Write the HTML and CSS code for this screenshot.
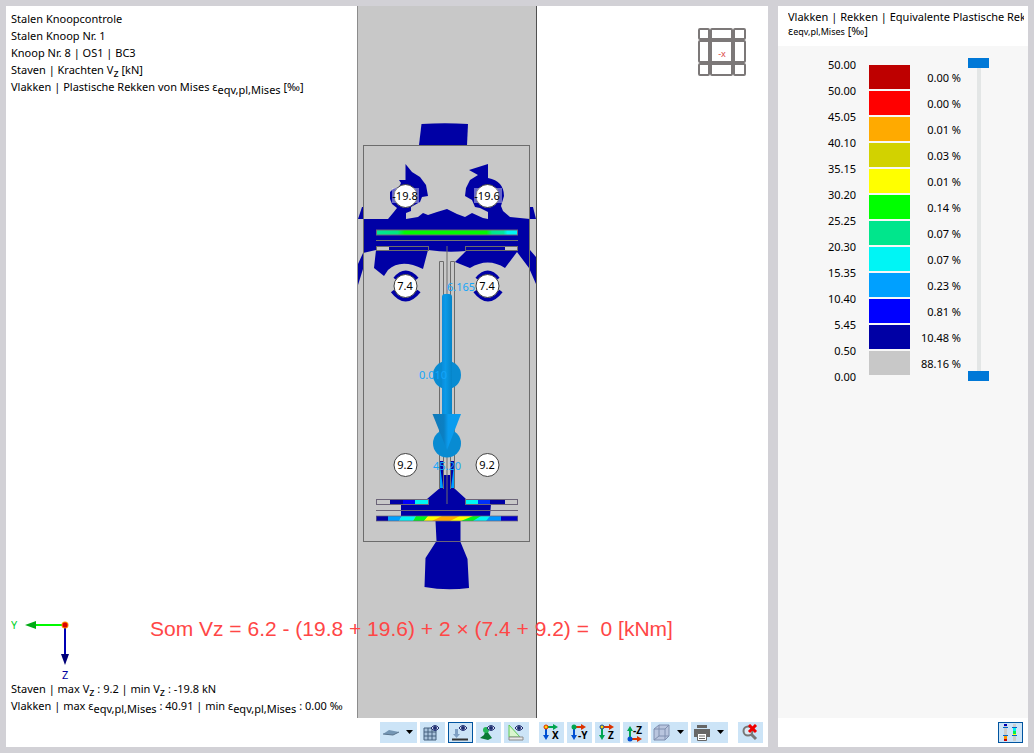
FILE: index.html
```html
<!DOCTYPE html>
<html lang="nl">
<head>
<meta charset="utf-8">
<title>Stalen Knoopcontrole</title>
<link rel="stylesheet" href="styles.css">
</head>
<body>
<main class="app">
  <section class="view">
    <div class="canvas">
      <svg class="model" viewBox="6 6 762 712" role="img" aria-label="Stalen knoop met plastische rekken">
        <defs>
          <linearGradient id="top-strain">
            <stop offset="0" stop-color="#00e696"/><stop offset=".15" stop-color="#00e680"/><stop offset=".2" stop-color="#00fa00"/>
            <stop offset=".78" stop-color="#00fa00"/><stop offset=".82" stop-color="#00e68c"/><stop offset=".9" stop-color="#00e6a0"/><stop offset=".93" stop-color="#00f5f5"/><stop offset="1" stop-color="#00f5f5"/>
          </linearGradient>
          <linearGradient id="rod">
            <stop offset="0" stop-color="#0a8ddb"/><stop offset=".35" stop-color="#0a9ae8"/><stop offset="1" stop-color="#0584c8"/>
          </linearGradient>
          <linearGradient id="cone">
            <stop offset="0" stop-color="#1279b8"/><stop offset=".4" stop-color="#0a80c4"/><stop offset=".55" stop-color="#0a9cee"/><stop offset="1" stop-color="#0a9cee"/>
          </linearGradient>
        </defs>
        <rect x="357" y="-2000" width="180" height="5000" fill="#c8c8c8"/>
        <path d="M357.5-2000V3000" stroke="#8c8c8c"/>
        <path d="M536.5-2000V3000" stroke="#505050"/>

        <g fill="#0000a5">
          <path d="M421.500 124Q445 122.500 468 124L467 145H419Z"/>
          <path d="M358 219L362 207H363V219H388L393 213L397 208L392 204L390 199L390 192L393 189L399 187L401 183L399 180L405.500 180V164L412 172L420 177L426 185L428 196L422 197L420 202L411 207V211L406 213V219L418 217L423 213L428 215L437 212L447 209L457 214L465 217L472 213L483 218L488 219V212L480 208L475 207L472 200L465 196L466 188L470 180L478 175L469 170L488 164V178Q504 181 504 196L501 206L503 211L510 217L530 219V207H533L536 219H530V250L536 257V284L529 268L517 252L505 268Q488 257 470 268L455 262L466 251Q447 253 428 250L423 269Q401 258 388 270L384 276L374 268L376 250L363 253V269L358 285V264L363 253V219Z"/>
          <path d="M401 516V504H428L427 499L440 488H443.500V475H450V488H454L466 499V504H491L490 516Z"/>
          <path d="M435.500 521H460.500V542L467.500 559L469 588Q446 591 424.500 587L425.500 558L436.500 541Z"/>
        </g>
        <g fill="none" stroke="#0000a5" stroke-width="4">
          <path d="M395 279Q405.500 266 417 279M392.500 291Q405.500 308 419 291"/>
          <path d="M477 279Q488 266 498 279M475 291Q488 308 501 291"/>
        </g>

        <rect x="363.500" y="145.500" width="166" height="396" fill="none" stroke="#6c6c6c"/>

        <rect x="376.500" y="230" width="141" height="5" fill="url(#top-strain)" stroke="#6e6478"/>
        <path d="M376 240.500H518" stroke="#747474"/>
        <rect x="377" y="247" width="12" height="4" fill="#c8c8c8"/>
        <rect x="505" y="247" width="12" height="4" fill="#c8c8c8"/>
        <g fill="none" stroke="#6c6c6c">
          <rect x="376.500" y="246.500" width="52" height="4"/>
          <rect x="465.500" y="246.500" width="52" height="4"/>
          <path d="M447 246V504M439.500 489V261.500H443.500V489M450.500 489V261.500H454.500V489"/>
        </g>
        <path d="M440 461H443V489H440ZM451 461H454V489H451Z" fill="#0000a5"/>
        <path d="M440 465L443 488H440ZM454 465L451 488H454Z" fill="#00a0ff"/>

        <rect x="390" y="500" width="14" height="4" fill="#0000a5"/><rect x="403" y="500" width="12" height="4" fill="#0000fa"/><rect x="415" y="500" width="13" height="4" fill="#00f5f5"/>
        <rect x="466" y="500" width="12" height="4" fill="#00f5f5"/><rect x="478" y="500" width="13" height="4" fill="#0030fa"/><rect x="490" y="500" width="15" height="4" fill="#0000a5"/>
        <rect x="376" y="516" width="14" height="5" fill="#0000a5"/>
        <path d="M388 516H402L399 521H388Z" fill="#00a0ff"/>
        <path d="M402 516H416L413 521H399Z" fill="#00f5f5"/>
        <path d="M416 516H429L424 521H413Z" fill="#00f51e"/>
        <path d="M428 516H446L436 521H424Z" fill="#ffff00"/>
        <path d="M442 516H462L454 521H432Z" fill="#ffaa00"/>
        <path d="M460 516H474L462 521H450Z" fill="#ffff00"/>
        <path d="M473 516H482L474 521H461Z" fill="#00f51e"/>
        <path d="M481 516H491L487 521H473Z" fill="#00f5f5"/>
        <path d="M490 516H502L502 521H486Z" fill="#0096ff"/>
        <rect x="501" y="516" width="17" height="5" fill="#0000c8"/>
        <g fill="none" stroke="#6c6478">
          <rect x="376.500" y="499.500" width="52" height="5"/>
          <rect x="465.500" y="499.500" width="52" height="5"/>
          <rect x="376.500" y="516" width="141" height="5" stroke-opacity=".7"/>
          <path d="M376 510.500H518M436 541.500H461"/>
        </g>

        <circle cx="447" cy="375" r="14" fill="#088bd2"/>
        <circle cx="447" cy="443.500" r="14" fill="#088bd2"/>
        <path d="M442 415V297Q442 294 445 294H449Q452 294 452 297V415Z" fill="url(#rod)"/>
        <path d="M432.500 414H461L447 450Z" fill="url(#cone)"/>
        <g class="force">
          <text x="447" y="291">6.165</text>
          <text x="419" y="379">0.010</text>
          <text x="433" y="470">45.20</text>
        </g>

        <g fill="#fff" stroke="#404040">
          <circle cx="405.500" cy="196" r="11.500"/><circle cx="487.500" cy="196" r="11.500"/>
          <circle cx="405.500" cy="286" r="11.500"/><circle cx="487.500" cy="286" r="11.500"/>
          <circle cx="405.500" cy="465" r="11.500"/><circle cx="487.500" cy="465" r="11.500"/>
        </g>
        <path d="M392 188H419V203H392ZM474 188H502V203H474Z" fill="#fff" fill-opacity=".4"/>
        <g class="bolt">
          <text x="405" y="200">-19.8</text><text x="487" y="200">-19.6</text>
          <text x="405" y="290">7.4</text><text x="487" y="290">7.4</text>
          <text x="405" y="469">9.2</text><text x="487" y="469">9.2</text>
        </g>
        <text class="sum" x="150" y="636">Som Vz = 6.2 - (19.8 + 19.6) + 2 × (7.4 + 9.2) =&nbsp; 0 [kNm]</text>
      </svg>

      <div class="overlay">
        <div class="caption">
          <p>Stalen Knoopcontrole</p>
          <p>Stalen Knoop Nr. 1</p>
          <p>Knoop Nr. 8 | OS1 | BC3</p>
          <p>Staven | Krachten V<sub>z</sub> [kN]</p>
          <p>Vlakken | Plastische Rekken von Mises ε<sub>eqv,pl,Mises</sub> [‰]</p>
        </div>
        <svg class="cube" width="50" height="50" viewBox="0 0 50 50" aria-label="Kijkrichting -X">
          <g fill="#fff" stroke="#7c7878" stroke-width="2">
            <rect x="2" y="2" width="10" height="10" rx="1"/><rect x="14" y="2" width="21" height="10" rx="1"/><rect x="37" y="2" width="11" height="10" rx="1"/>
            <rect x="2" y="14" width="10" height="21" rx="1"/><rect x="14" y="14" width="21" height="21" rx="1"/><rect x="37" y="14" width="11" height="21" rx="1"/>
            <rect x="2" y="37" width="10" height="11" rx="1"/><rect x="14" y="37" width="21" height="11" rx="1"/><rect x="37" y="37" width="11" height="11" rx="1"/>
          </g>
          <path d="M13 3V47M36 3V47M3 13H47M3 36H47" stroke="#7c7878" stroke-width="2"/>
          <text class="cube-label" x="25" y="30">-x</text>
        </svg>
      </div>
      <div class="overlay overlay-bottom">
        <div class="caption">
          <svg class="axes" width="70" height="68" viewBox="0 -4 70 68" aria-label="Assen Y en Z">
            <path d="M54 9H24" stroke="#00fa00" stroke-width="2"/>
            <path d="M14 9L25 5V13Z" fill="#00aa14"/>
            <path d="M54 9V39" stroke="#0000b4" stroke-width="2"/>
            <path d="M50 38H58L54 49Z" fill="#000078"/>
            <circle cx="54" cy="9" r="3.500" fill="#ff8c00"/><circle cx="54" cy="9" r="2.500" fill="#dc0000"/>
            <text x="0" y="13" fill="#00d228">Y</text><text x="51" y="63" fill="#0000a0">Z</text>
          </svg>
          <p>Staven | max V<sub>z</sub> : 9.2 | min V<sub>z</sub> : -19.8 kN</p>
          <p>Vlakken | max ε<sub>eqv,pl,Mises</sub> : 40.91 | min ε<sub>eqv,pl,Mises</sub> : 0.00 ‰</p>
        </div>
      </div>
    </div>

    <div class="toolbar" role="toolbar">
      <div class="group">
        <button class="tool wide" aria-label="Weergavevlak">
          <svg width="20" height="17" viewBox="0 0 20 17"><path d="M2 10L8 6L18 8L12 11Z" fill="#7496b4"/><path d="M2 10L12 11L18 8" fill="none" stroke="#58738c"/></svg>
          <svg class="arrow" width="7" height="5" viewBox="0 0 7 5"><path d="M0 0H7L3.500 4Z"/></svg>
        </button>
        <button class="tool" aria-label="Raster tonen">
          <svg width="21" height="17" viewBox="0 0 21 17"><path d="M2 4H14V16H2Z" fill="#a9c3dc" stroke="#45617e"/><path d="M2 8H14M2 12H14M6 4V16M10 4V16" stroke="#45617e"/><g class="eye"><path d="M9 4Q13-1 17 4Q13 9 9 4Z"/><circle cx="13" cy="4" r="2"/></g></svg>
        </button>
        <button class="tool selected" aria-label="Belasting tonen" aria-pressed="true">
          <svg width="21" height="17" viewBox="0 0 21 17"><path d="M5 5H8V10H10L6.500 14L3 10H5Z" fill="#7fa0c4"/><path d="M2 15.500H18" stroke="#333" stroke-width="2"/><g class="eye"><path d="M9 4Q13-1 17 4Q13 9 9 4Z"/><circle cx="13" cy="4" r="2"/></g></svg>
        </button>
        <button class="tool" aria-label="Steunpunt tonen">
          <svg width="21" height="17" viewBox="0 0 21 17"><path d="M8 5L11 10L14 14L10 16L2 14L6 11Z" fill="#0b7a35"/><circle cx="8" cy="6" r="3" fill="#23b757"/><g class="eye"><path d="M9 4Q13-1 17 4Q13 9 9 4Z"/><circle cx="13" cy="4" r="2"/></g></svg>
        </button>
        <button class="tool" aria-label="Maten tonen">
          <svg width="21" height="17" viewBox="0 0 21 17"><path d="M3 1V13H14Z" fill="#d9f5cf" stroke="#5ecb55"/><path d="M3 13H17V16H3Z" fill="#e8e8e8" stroke="#8a8a8a"/><g class="eye"><path d="M9 4Q13-1 17 4Q13 9 9 4Z"/><circle cx="13" cy="4" r="2"/></g></svg>
        </button>
      </div>
      <div class="group">
        <button class="tool" aria-label="Aanzicht X">
          <svg width="21" height="17" viewBox="0 0 21 17"><path d="M5 3H13" stroke="#00a550" stroke-width="2"/><path d="M12 0L17 3L12 6Z" fill="#00a550"/><path d="M5 4V12" stroke="#004fd2" stroke-width="2"/><path d="M2 11H8L5 16Z" fill="#004fd2"/><circle cx="5" cy="3" r="2" fill="#ffd700" stroke="#e12800"/><text x="11" y="15">X</text></svg>
        </button>
        <button class="tool" aria-label="Aanzicht -Y">
          <svg width="21" height="17" viewBox="0 0 21 17"><path d="M5 3H13" stroke="#dc3200" stroke-width="2"/><path d="M12 0L17 3L12 6Z" fill="#dc3200"/><path d="M5 4V12" stroke="#004fd2" stroke-width="2"/><path d="M2 11H8L5 16Z" fill="#004fd2"/><circle cx="5" cy="3" r="2.500" fill="#00a550"/><text x="9" y="15">-Y</text></svg>
        </button>
        <button class="tool" aria-label="Aanzicht Z">
          <svg width="21" height="17" viewBox="0 0 21 17"><path d="M5 3H13" stroke="#dc3200" stroke-width="2"/><path d="M12 0L17 3L12 6Z" fill="#dc3200"/><path d="M5 4V12" stroke="#00a550" stroke-width="2"/><path d="M2 11H8L5 16Z" fill="#00a550"/><circle cx="5" cy="3" r="2" fill="#ffd700" stroke="#1446a0"/><text x="11" y="15">Z</text></svg>
        </button>
        <button class="tool" aria-label="Aanzicht -Z">
          <svg width="21" height="19" viewBox="0 -2 21 19"><path d="M5 14H13" stroke="#dc3200" stroke-width="2"/><path d="M12 11L17 14L12 17Z" fill="#dc3200"/><path d="M5 13V5" stroke="#00a550" stroke-width="2"/><path d="M2 6H8L5 1Z" fill="#00a550"/><circle cx="5" cy="14" r="2.500" fill="#004fd2"/><text x="8" y="9">-Z</text></svg>
        </button>
        <button class="tool wide" aria-label="Weergavemodel">
          <svg width="20" height="17" viewBox="0 0 20 17"><path d="M2 5L7 1H17V12L13 16H2Z" fill="#b9c5de" stroke="#8090b0"/><path d="M2 5H13V16M13 5L17 1M7 1V12H17M7 12L2 16" fill="none" stroke="#8090b0"/></svg>
          <svg class="arrow" width="7" height="5" viewBox="0 0 7 5"><path d="M0 0H7L3.500 4Z"/></svg>
        </button>
        <button class="tool wide" aria-label="Afdrukken">
          <svg width="20" height="17" viewBox="0 0 20 17"><path d="M5 1H15V4H5ZM2 5H18V13H2Z" fill="#666"/><path d="M5.500 9.500H14.500V16.500H5.500Z" fill="#fff" stroke="#666"/><path d="M7 12H13M7 14.500H13" stroke="#666"/></svg>
          <svg class="arrow" width="7" height="5" viewBox="0 0 7 5"><path d="M0 0H7L3.500 4Z"/></svg>
        </button>
      </div>
      <div class="group">
        <button class="tool" aria-label="Zoom opheffen">
          <svg width="21" height="17" viewBox="0 0 21 17"><circle cx="8" cy="7" r="4.500" fill="#dceaf5" stroke="#777" stroke-width="2"/><path d="M11 10L16 15" stroke="#777" stroke-width="3"/><path d="M9 1L16 8M16 1L9 8" stroke="#f00000" stroke-width="3"/></svg>
        </button>
      </div>
    </div>
  </section>

  <aside class="panel">
    <header class="panel-head">
      <h1>Vlakken | Rekken | Equivalente Plastische Rek</h1>
      <p>ε<small>eqv,pl,Mises</small> [‰]</p>
    </header>
    <div class="legend">
      <ol class="limits">
        <li>50.00</li><li>50.00</li><li>45.05</li><li>40.10</li><li>35.15</li><li>30.20</li><li>25.25</li><li>20.30</li><li>15.35</li><li>10.40</li><li>5.45</li><li>0.50</li><li>0.00</li>
      </ol>
      <ol class="bands">
        <li class="c1">0.00 %</li><li class="c2">0.00 %</li><li class="c3">0.01 %</li><li class="c4">0.03 %</li><li class="c5">0.01 %</li><li class="c6">0.14 %</li><li class="c7">0.07 %</li><li class="c8">0.07 %</li><li class="c9">0.23 %</li><li class="c10">0.81 %</li><li class="c11">10.48 %</li><li class="c12">88.16 %</li>
      </ol>
      <div class="range">
        <input type="range" min="0" max="50" value="50" aria-label="Bovengrens">
        <input type="range" min="0" max="50" value="0" aria-label="Ondergrens">
      </div>
    </div>
    <footer class="panel-foot">
      <button class="tool selected" aria-label="Kleurenschaal">
        <svg width="21" height="19" viewBox="0 0 21 19"><path d="M4 1H7V18H4ZM13 1H16V18H13Z" fill="#ccc"/><path d="M4 1H7V3H4Z" fill="#0000b4"/><path d="M4 13H7V16H4Z" fill="#ff9600"/><path d="M4 16H7V18H4Z" fill="#c80000"/><path d="M13 5H16V8H13Z" fill="#00f0f0"/><path d="M13 8H16V11H13Z" fill="#00f050"/><path d="M13 11H16V12H13Z" fill="#ff0"/><path d="M3 4.500H8M3 12.500H8M12 4.500H17M12 12.500H17" stroke="#0064c8"/></svg>
      </button>
    </footer>
  </aside>
</main>
</body>
</html>
```
FILE: styles.css
```css
*, ::before { box-sizing: border-box; }

body {
  margin: 0;
  background: #d2d1d6;
  color: #000;
  font: 11px/17px "Noto Sans", "Open Sans", sans-serif;
}

p, h1, ol { margin: 0; padding: 0; font: inherit; }
ol { list-style: none; }

.app {
  display: grid;
  grid-template-columns: 1fr 250px;
  gap: 10px;
  height: 100vh;
  padding: 6px;
}

.view, .panel {
  display: flex;
  flex-direction: column;
  min-width: 0;
  min-height: 0;
  background: #fff;
}

.canvas { position: relative; flex: 1; min-height: 0; overflow: hidden; }
.model { position: absolute; inset: 0; width: 100%; height: 100%; }
.force { fill: #14a5fa; }
.bolt { text-anchor: middle; }
.sum { fill: #ff4646; font: 21px "Liberation Sans", Arial, sans-serif; }

.overlay {
  position: absolute;
  top: 0;
  left: 0;
  right: 0;
  display: flex;
  justify-content: space-between;
  padding: 4px 5px;
}
.overlay-bottom { top: auto; bottom: 0; }
.caption p { height: 17px; white-space: nowrap; }
.caption sub { font-size: 11px; line-height: 0; vertical-align: -3px; }
.axes { display: block; }
.cube { margin: 17px 16px 0 0; }
.cube-label { fill: #dc4646; font-size: 9px; text-anchor: middle; }

.toolbar {
  display: flex;
  justify-content: flex-end;
  gap: 10px;
  padding: 4px 5px;
}
.group { display: flex; gap: 3px; }

.tool {
  display: flex;
  align-items: center;
  justify-content: center;
  width: 25px;
  height: 21px;
  padding: 0;
  border: 0;
  background: #cce4f7;
}
.tool.wide { width: 37px; gap: 5px; padding-right: 4px; }
.tool.selected { border: 1px solid #0054a0; }
.tool text { font: bold 10px "Noto Sans", sans-serif; }
.eye path { fill: #e6ebff; stroke: #1c2c6e; }
.eye circle { fill: #1c2c6e; }

.panel-head { height: 40px; padding: 3px 4px 3px 10px; }
.panel-head h1 { overflow: hidden; line-height: 15px; white-space: nowrap; }
.panel-head small { font-size: 9px; }
.panel-head p { line-height: 14px; }

.legend {
  display: flex;
  flex: 1;
  justify-content: flex-end;
  padding: 6px 39px 0 0;
  background: #f7f7f7;
  line-height: 26px;
}
.limits { margin-right: 13px; text-align: right; }
.bands { width: 92px; margin: 13px 7px 0 0; }
.bands li { display: flex; justify-content: space-between; }
.bands li::before {
  content: "";
  width: 41px;
  height: 26px;
  border-bottom: 2px solid #f7f7f7;
  background: var(--band);
}
.c1 { --band: #be0000; }
.c2 { --band: #ff0000; }
.c3 { --band: #ffaa00; }
.c4 { --band: #d2d200; }
.c5 { --band: #ffff00; }
.c6 { --band: #00ff00; }
.c7 { --band: #00e68c; }
.c8 { --band: #00f5f5; }
.c9 { --band: #00a0ff; }
.c10 { --band: #0000ff; }
.c11 { --band: #0000a5; }
.c12 { --band: #c8c8c8; }

.range {
  display: grid;
  width: 21px;
  height: 323px;
  margin-top: 6px;
  background: linear-gradient(#e3e6e6, #e3e6e6) center / 4px 100% no-repeat;
}
.range input {
  grid-area: 1 / 1;
  width: 21px;
  height: 323px;
  margin: 0;
  appearance: none;
  background: none;
  writing-mode: vertical-lr;
  direction: rtl;
  pointer-events: none;
}
.range input::-webkit-slider-thumb {
  appearance: none;
  width: 21px;
  height: 10px;
  background: #0078d7;
  pointer-events: auto;
}

.panel-foot { display: flex; justify-content: flex-end; padding: 4px 5px; }
```
